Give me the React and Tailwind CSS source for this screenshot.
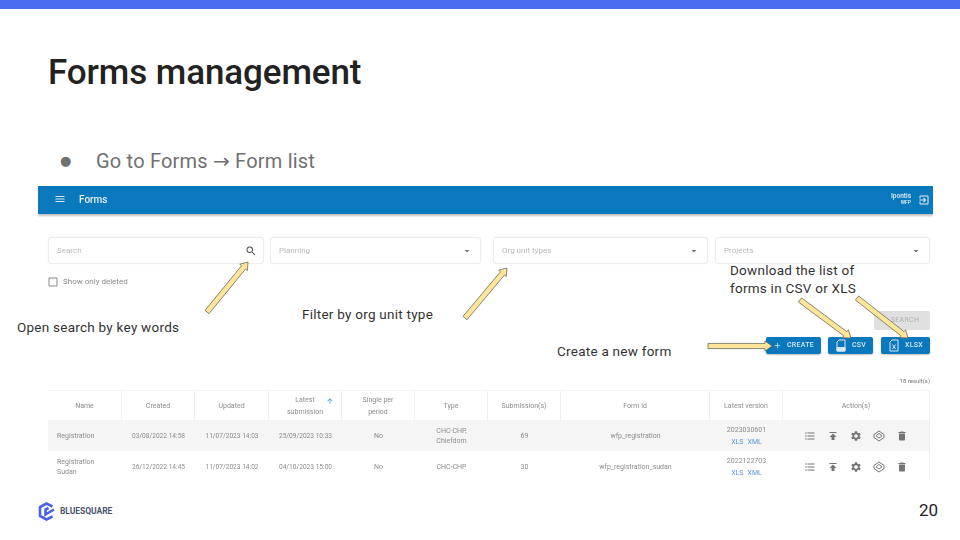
import {
  MdAdd,
  MdArrowDropDown,
  MdArrowUpward,
  MdCheckBoxOutlineBlank,
  MdDelete,
  MdExitToApp,
  MdFormatListBulleted,
  MdMenu,
  MdPublish,
  MdSearch,
  MdSettings,
} from 'react-icons/md'

const columns = 'grid grid-cols-[74px_73px_74px_73px_73px_73px_73px_149px_73px_146px]'

const rows = [
  {
    name: ['Registration'],
    created: '03/08/2022 14:58',
    updated: '11/07/2023 14:03',
    latest: '25/09/2023 10:33',
    type: ['CHC-CHP,', 'Chiefdom'],
    count: '69',
    formId: 'wfp_registration',
    version: '2023030601',
    bg: 'bg-[#f5f5f5]',
  },
  {
    name: ['Registration', 'Sudan'],
    created: '26/12/2022 14:45',
    updated: '11/07/2023 14:02',
    latest: '04/10/2023 15:00',
    type: ['CHC-CHP'],
    count: '30',
    formId: 'wfp_registration_sudan',
    version: '2022122703',
    bg: 'bg-white',
  },
]

// yellow annotation arrows drawn over the screenshot
const arrows = [
  [207, 312, 248, 262],
  [465, 318, 507, 268],
  [708, 346, 772, 346],
  [800, 300, 851, 338],
  [857, 298, 908, 338],
]

const arrowPoints = ([x1, y1, x2, y2]) => {
  const len = Math.hypot(x2 - x1, y2 - y1)
  const ux = (x2 - x1) / len
  const uy = (y2 - y1) / len
  const nx = -uy
  const ny = ux
  const bx = x2 - ux * 7
  const by = y2 - uy * 7
  const pts = [
    [x1 + nx * 2.6, y1 + ny * 2.6],
    [bx + nx * 2.6, by + ny * 2.6],
    [bx + nx * 5, by + ny * 5],
    [x2, y2],
    [bx - nx * 5, by - ny * 5],
    [bx - nx * 2.6, by - ny * 2.6],
    [x1 - nx * 2.6, y1 - ny * 2.6],
  ]
  return pts.map(p => p.join(',')).join(' ')
}

const Filter = ({ label, width, icon }) => (
  <div className={`${width} h-[27px] flex items-center justify-between pl-[8px] pr-[6px] bg-white border border-[#ececec] rounded-[3px] shadow-[0_0_2px_rgba(0,0,0,0.06)]`}>
    <span className="text-[8px] text-[#b8b8b8]">{label}</span>
    {icon || <MdArrowDropDown className="text-[#777] mr-[1px]" size={12} />}
  </div>
)

const FileIcon = ({ x }) => (
  <svg width="12" height="13" viewBox="0 0 12 13" fill="none" stroke="#d7e8f3" strokeWidth="1">
    <path d="M4 1h6v11h-8v-9z" />
    {x
      ? <path d="M4.500 5.500l3 4.500M7.500 5.500l-3 4.500" />
      : <path d="M2 8.500h8v3.500h-8z" fill="#d7e8f3" />}
  </svg>
)

const ActionButton = ({ width, icon, label }) => (
  <div className={`${width} h-[17px] flex items-center justify-center gap-[5px] bg-[#0a78bd] rounded-[2px] text-[7px] tracking-[0.3px] text-[#d7e8f3] font-medium shadow-[0_1px_2px_rgba(0,0,0,0.25)]`}>
    {icon}
    <span>{label}</span>
  </div>
)

const HexIcon = () => (
  <svg width="12" height="12" viewBox="0 0 24 24" fill="none" stroke="#757575" strokeWidth="2">
    <path d="M12 2l10 7v6l-10 7-10-7v-6z" />
    <path d="M12 7l6 4.500-6 4.500-6-4.500z" />
  </svg>
)

const Cell = ({ children, className = '' }) => (
  <div className={`flex flex-col items-center justify-center text-center ${className}`}>{children}</div>
)

const HeadCell = ({ children, className = '' }) => (
  <Cell className={`border-r border-[#f0f0f0] last:border-r-0 ${className}`}>{children}</Cell>
)

const Logo = () => (
  <svg width="18" height="19" viewBox="0 0 18 19" fill="none" stroke="#4a63e0" strokeWidth="2.600">
    <path d="M14.500 4.500L8.500 1.500 2 5v9l6.500 3.500 6-3" />
    <path d="M16 7.500L7.500 12.500V7.500L10.500 6" />
  </svg>
)

export default function App() {
  return (
    <div className="relative w-[960px] h-[540px] overflow-hidden bg-white flex flex-col antialiased font-['Roboto',sans-serif]">
      <div className="h-[9px] bg-[#4a6cf0]" />

      <h1 className="mt-[42px] ml-[48px] text-[35px] leading-[44px] tracking-[-0.1px] font-medium text-[#222]">Forms management</h1>

      <div className="mt-[54px] ml-[60px] h-[24px] flex items-center text-[20px] leading-[24px] text-[#707070]">
        <span className="w-[36px] text-[13px] font-['DejaVu_Sans',sans-serif]">●</span>
        <span className="tracking-[0.2px]">Go to Forms <span className="font-['DejaVu_Sans',sans-serif] text-[20px]">→</span> Form list</span>
      </div>

      <div className="mt-[13px] ml-[38px] w-[895px] h-[294px] overflow-hidden flex flex-col blur-[0.6px]">
        <div className="h-[28px] shrink-0 flex items-center bg-[#0a78bd] shadow-[0_2px_2px_rgba(0,0,0,0.25)] pl-[16px] pr-[3px] text-white">
          <MdMenu size={12} className="text-[#d7e8f3] -mt-[2px]" />
          <span className="ml-[13px] -mt-[2px] text-[10px] font-medium text-[#e4f0f8]">Forms</span>
          <div className="ml-auto mr-[7px] -mt-[2px] flex flex-col items-end text-[6.500px] leading-[7px] font-medium text-[#e4f0f8]">
            <span>Ipontis</span>
            <span className="text-[5px] leading-[5px]">WFP</span>
          </div>
          <MdExitToApp size={12} className="text-[#e4f0f8] -mt-[1px]" />
        </div>

        <div className="flex flex-col pl-[10px] pr-[3px]">
          <div className="mt-[23px] flex">
            <Filter label="Search" width="w-[216px]" icon={<MdSearch size={12} className="text-[#555]" />} />
            <div className="ml-[6px]"><Filter label="Planning" width="w-[211px]" /></div>
            <div className="ml-[12px]"><Filter label="Org unit types" width="w-[215px]" /></div>
            <div className="ml-[7px]"><Filter label="Projects" width="w-[215px]" /></div>
          </div>

          <div className="mt-[11px] h-[14px] flex items-center gap-[4px] text-[8px] text-[#8a8a8a]">
            <MdCheckBoxOutlineBlank size={12} className="text-[#8a8a8a] -ml-[1px]" />
            <span>Show only deleted</span>
          </div>

          <div className="mt-[22px] self-end w-[56px] h-[19px] flex items-center justify-center bg-[#e0e0e0] rounded-[2px] text-[7px] tracking-[0.3px] text-[#b0b0b0]">
            <span className="ml-[6px]">SEARCH</span>
          </div>

          <div className="mt-[7px] flex justify-end">
            <ActionButton width="w-[55px]" icon={<MdAdd size={9} />} label="CREATE" />
            <div className="ml-[7px]"><ActionButton width="w-[45px]" icon={<FileIcon />} label="CSV" /></div>
            <div className="ml-[8px]"><ActionButton width="w-[49px]" icon={<FileIcon x />} label="XLSX" /></div>
          </div>

          <div className="mt-[21px] h-[10px] flex items-center justify-end text-[6px] text-[#777]">18 result(s)</div>

          <div className="mt-[5px] w-[882px] border-r border-[#efefef] text-[7px] leading-[10px] text-[#8c8c8c]">
            <div className={`${columns} h-[30px] bg-white border-t border-[#f5f5f5]`}>
              <HeadCell>Name</HeadCell>
              <HeadCell>Created</HeadCell>
              <HeadCell>Updated</HeadCell>
              <HeadCell className="relative leading-[12px]">
                <span>Latest</span>
                <span>submission</span>
                <MdArrowUpward size={8} className="absolute top-[6px] right-[7px] text-[#3f8fc7]" />
              </HeadCell>
              <HeadCell className="leading-[12px]"><span>Single per</span><span>period</span></HeadCell>
              <HeadCell>Type</HeadCell>
              <HeadCell>Submission(s)</HeadCell>
              <HeadCell>Form id</HeadCell>
              <HeadCell>Latest version</HeadCell>
              <HeadCell>Action(s)</HeadCell>
            </div>

            {rows.map(row => (
              <div key={row.formId} className={`${columns} h-[31px] ${row.bg}`}>
                <div className="flex flex-col justify-center pl-[9px]">
                  {row.name.map(line => <span key={line}>{line}</span>)}
                </div>
                <Cell className="text-[6.600px]">{row.created}</Cell>
                <Cell className="text-[6.600px]">{row.updated}</Cell>
                <Cell className="text-[6.600px]">{row.latest}</Cell>
                <Cell>No</Cell>
                <Cell>{row.type.map(line => <span key={line}>{line}</span>)}</Cell>
                <Cell>{row.count}</Cell>
                <Cell>{row.formId}</Cell>
                <Cell className="leading-[12px]">
                  <span>{row.version}</span>
                  <span className="text-[#5b93d8] flex gap-[4px]"><span>XLS</span><span>XML</span></span>
                </Cell>
                <div className="flex items-center justify-center gap-[11px] text-[#757575]">
                  <MdFormatListBulleted size={12} />
                  <MdPublish size={12} />
                  <MdSettings size={12} />
                  <HexIcon />
                  <MdDelete size={12} />
                </div>
              </div>
            ))}
          </div>
        </div>
      </div>

      <div className="mt-[20px] ml-[38px] mr-[22px] h-[22px] flex items-center">
        <Logo />
        <span className="ml-[4px] text-[8.500px] font-bold tracking-[-0.05px] text-[#4a5670]">BLUESQUARE</span>
        <span className="ml-auto text-[17px] text-[#222]">20</span>
      </div>

      {/* annotations on top of the screenshot */}
      <svg className="absolute inset-0 pointer-events-none" width="960" height="540" viewBox="0 0 960 540">
        {arrows.map(a => (
          <polygon key={a.join('-')} points={arrowPoints(a)} fill="#ffe599" stroke="#6b6b5a" strokeWidth="0.800" strokeLinejoin="round" />
        ))}
      </svg>
      <span className="absolute left-[17px] top-[319px] text-[13.500px] leading-[16px] tracking-[0.25px] text-[#333]">Open search by key words</span>
      <span className="absolute left-[302px] top-[306px] text-[13.500px] leading-[16px] tracking-[0.25px] text-[#333]">Filter by org unit type</span>
      <span className="absolute left-[557px] top-[343px] text-[13.500px] leading-[16px] tracking-[0.25px] text-[#333]">Create a new form</span>
      <div className="absolute left-[730px] top-[262px] flex flex-col text-[13.500px] leading-[17.500px] tracking-[0.25px] text-[#333]">
        <span>Download the list of</span>
        <span>forms in CSV or XLS</span>
      </div>
    </div>
  )
}
